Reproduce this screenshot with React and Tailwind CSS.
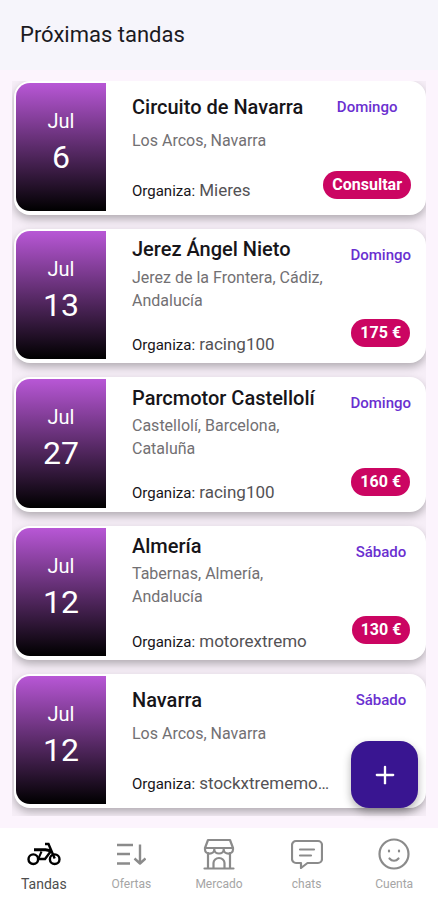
import { Plus } from "lucide-react";

const EVENTS = [
  { month: "Jul", day: 6, title: "Circuito de Navarra", place: "Los Arcos, Navarra", host: "Mieres", weekday: "Domingo", price: "Consultar" },
  { month: "Jul", day: 13, title: "Jerez Ángel Nieto", place: "Jerez de la Frontera, Cádiz, Andalucía", host: "racing100", weekday: "Domingo", price: "175 €" },
  { month: "Jul", day: 27, title: "Parcmotor Castellolí", place: "Castellolí, Barcelona, Cataluña", host: "racing100", weekday: "Domingo", price: "160 €" },
  { month: "Jul", day: 12, title: "Almería", place: "Tabernas, Almería, Andalucía", host: "motorextremo", weekday: "Sábado", price: "130 €" },
  { month: "Jul", day: 12, title: "Navarra", place: "Los Arcos, Navarra", host: "stockxtrememo…", weekday: "Sábado" },
];

function MotoIcon() {
  return (
    <svg viewBox="0 0 34 24" className="h-6 w-[34px]" fill="none" stroke="currentColor" strokeWidth="2.4">
      <circle cx="6.3" cy="17.2" r="4.8" />
      <circle cx="27.7" cy="17.2" r="4.8" />
      <path d="M18 2h3.5l6.2 14.5" />
      <path d="M7 7.800h11.500l5 1" strokeWidth="3" />
      <path d="M11 17h7l6-8" />
      <path d="M11.500 16.500l3-7" strokeWidth="2" />
    </svg>
  );
}

function SortIcon() {
  return (
    <svg viewBox="0 0 30 24" className="h-6 w-[30px]" fill="none" stroke="currentColor" strokeWidth="2.4" strokeLinejoin="round">
      <path d="M1 3h16M1 12h13M1 21.5h13" />
      <path d="M24 2.5V21M18.500 16.500l5.500 5 5.500-5" />
    </svg>
  );
}

function StoreIcon() {
  return (
    <svg viewBox="0 0 32 32" className="size-8" fill="none" stroke="currentColor" strokeWidth="2.2" strokeLinecap="round" strokeLinejoin="round">
      <path d="M5 2h22l3 8H2z" />
      <path d="M2 10v1.500a4.600 4 0 0 0 9.300 0V10v1.500a4.700 4 0 0 0 9.400 0V10v1.500a4.600 4 0 0 0 9.300 0V10" />
      <path d="M5 15v15M27 15v15M1.500 30.500h29" />
      <path d="M10.500 30v-5a5.500 5 0 0 1 11 0v5" />
    </svg>
  );
}

function ChatIcon() {
  return (
    <svg viewBox="0 0 32 30" className="h-[30px] w-8" fill="none" stroke="currentColor" strokeWidth="2.2" strokeLinecap="round" strokeLinejoin="round">
      <path d="M5 2h22a4 4 0 0 1 4 4v14a4 4 0 0 1-4 4H16.5L10 29v-5H5a4 4 0 0 1-4-4V6a4 4 0 0 1 4-4z" />
      <path d="M9 10.5h14M9 16.5h11" />
    </svg>
  );
}

function FaceIcon() {
  return (
    <svg viewBox="0 0 32 32" className="size-8" fill="none" stroke="currentColor" strokeWidth="2.2" strokeLinecap="round">
      <circle cx="16" cy="16" r="14.5" />
      <path d="M11 12.5v1M21 12.5v1" />
      <path d="M11.5 20.5c2.5 3 6.5 3 9 0" />
    </svg>
  );
}

const TABS = [
  { label: "Tandas", icon: MotoIcon, active: true },
  { label: "Ofertas", icon: SortIcon },
  { label: "Mercado", icon: StoreIcon },
  { label: "chats", icon: ChatIcon },
  { label: "Cuenta", icon: FaceIcon },
];

function EventCard({ event }) {
  return (
    <li className="flex min-h-[134px] flex-1 rounded-2xl bg-white pt-0.5 pb-1 pl-0.5 shadow-[0_4px_8px_rgba(0,0,0,0.28)]">
      <div className="flex w-[90px] shrink-0 flex-col items-center justify-center rounded-l-[14px] bg-linear-to-b/srgb from-[#b857d6] to-black text-white">
        <span className="text-xl leading-7">{event.month}</span>
        <span className="pb-2 text-[32px] leading-11">{event.day}</span>
      </div>
      <div className="flex min-w-0 flex-1 flex-col justify-evenly pt-0.5 pl-[26px]">
        <h2 className="text-xl leading-7 font-medium whitespace-nowrap text-[#171519]">{event.title}</h2>
        <p className="text-base leading-[23px] text-[#727073]">{event.place}</p>
        <p className="mt-[18px] text-[17px] leading-6 whitespace-nowrap text-[#545255]">
          <span className="text-[15px] text-[#171519]">Organiza:</span> {event.host}
        </p>
      </div>
      <div className="ml-4 flex min-w-[60px] flex-col items-center justify-between pt-3 pr-[15px] pb-3">
        <span className="min-w-[60px] text-center text-[15px] leading-6 font-medium text-[#6a2fd0]">{event.weekday}</span>
        {event.price && (
          <span className="rounded-full bg-[#cb0562] px-[9px] text-base leading-7 font-bold whitespace-nowrap text-white">{event.price}</span>
        )}
      </div>
    </li>
  );
}

export default function App() {
  return (
    <div className="flex min-h-screen flex-col bg-[#fcf4fd] font-[Roboto,sans-serif]">
      <header className="bg-[#f6f5fb] px-5 pt-[18px] pb-[18px]">
        <h1 className="text-[22px] leading-[34px] text-[#1b1a1f]">Próximas tandas</h1>
      </header>

      <main className="relative flex flex-1 flex-col px-3 pt-[11px] pb-3">
        <ul className="flex flex-1 flex-col gap-3.5 overflow-hidden bg-[#f6eef7] pl-0.5 pb-2">
          {EVENTS.map((event) => (
            <EventCard key={event.title} event={event} />
          ))}
        </ul>
        <button
          type="button"
          aria-label="Añadir tanda"
          className="absolute right-5 bottom-5 flex size-[67px] items-center justify-center rounded-[18px] bg-[#391591] text-white shadow-[0_4px_8px_rgba(0,0,0,0.3)]"
        >
          <Plus className="size-7" strokeWidth={2} />
        </button>
      </main>

      <nav className="grid grid-cols-5 bg-white pt-2.5 pb-1.5">
        {TABS.map(({ label, icon: Icon, active }) => (
          <a
            key={label}
            href={`#${label.toLowerCase()}`}
            aria-current={active ? "page" : undefined}
            className={`flex flex-col items-center gap-1 ${active ? "text-black" : "text-[#8b8b8b]"}`}
          >
            <span className="flex h-8 items-center">
              <Icon />
            </span>
            <span className={active ? "text-sm leading-5 text-[#4d4d4d]" : "text-xs leading-5 text-[#a5a5a5]"}>{label}</span>
          </a>
        ))}
      </nav>
    </div>
  );
}
